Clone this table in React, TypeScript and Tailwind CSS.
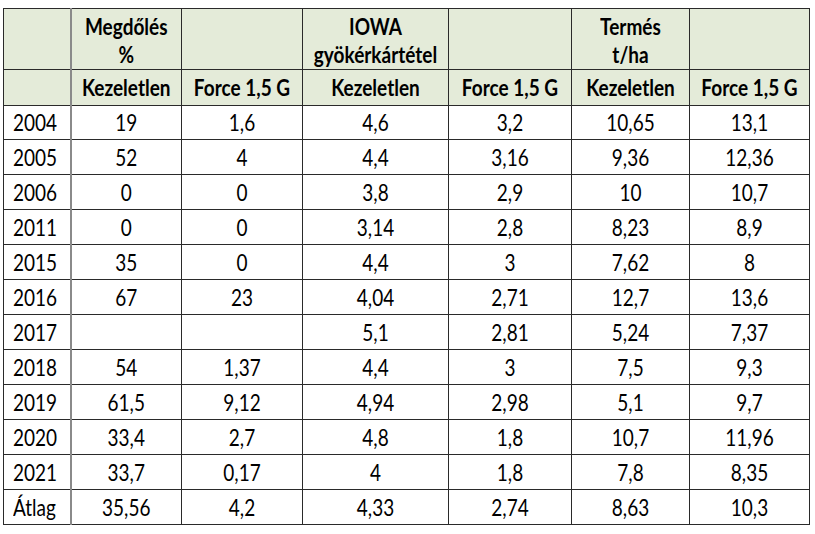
import React from "react";

const rows: string[][] = [
  ["2004", "19", "1,6", "4,6", "3,2", "10,65", "13,1"],
  ["2005", "52", "4", "4,4", "3,16", "9,36", "12,36"],
  ["2006", "0", "0", "3,8", "2,9", "10", "10,7"],
  ["2011", "0", "0", "3,14", "2,8", "8,23", "8,9"],
  ["2015", "35", "0", "4,4", "3", "7,62", "8"],
  ["2016", "67", "23", "4,04", "2,71", "12,7", "13,6"],
  ["2017", "", "", "5,1", "2,81", "5,24", "7,37"],
  ["2018", "54", "1,37", "4,4", "3", "7,5", "9,3"],
  ["2019", "61,5", "9,12", "4,94", "2,98", "5,1", "9,7"],
  ["2020", "33,4", "2,7", "4,8", "1,8", "10,7", "11,96"],
  ["2021", "33,7", "0,17", "4", "1,8", "7,8", "8,35"],
  ["Átlag", "35,56", "4,2", "4,33", "2,74", "8,63", "10,3"],
];

const widths = ["w-[67px]", "w-[111px]", "w-[121px]", "w-[146px]", "w-[123px]", "w-[118px]", "w-[120px]"];

function T({ children }: { children: React.ReactNode }) {
  return <span className="inline-block scale-y-[1.18]">{children}</span>;
}

export default function App() {
  const cellBase = "border border-[#2a2a2a] text-center p-0";
  const firstCol = "border-r-2 border-r-[#8a8a8a]";
  return (
    <div className="w-[815px] h-[534px] bg-white pt-[8px] pl-[3px]" style={{ fontFamily: "Lato, 'Open Sans', sans-serif" }}>
      <table className="border-collapse table-fixed w-[806px] text-[19px] text-black leading-none">
        <colgroup>
          {widths.map((w, i) => (
            <col key={i} className={w} />
          ))}
        </colgroup>
        <thead>
          <tr className="h-[61px] bg-[#e4ebd9] font-bold">
            <th className={`${cellBase} ${firstCol}`}></th>
            <th className={`${cellBase} align-bottom`}>
              <div className="leading-[28px]"><T>Megdőlés</T></div>
              <div className="leading-[28px]"><T>%</T></div>
            </th>
            <th className={cellBase}></th>
            <th className={`${cellBase} align-bottom`}>
              <div className="leading-[28px]"><T>IOWA</T></div>
              <div className="leading-[28px]"><T>gyökérkártétel</T></div>
            </th>
            <th className={cellBase}></th>
            <th className={`${cellBase} align-bottom`}>
              <div className="leading-[28px]"><T>Termés</T></div>
              <div className="leading-[28px]"><T>t/ha</T></div>
            </th>
            <th className={cellBase}></th>
          </tr>
          <tr className="h-[36px] bg-[#e4ebd9] font-bold">
            <th className={`${cellBase} ${firstCol}`}></th>
            <th className={cellBase}><T>Kezeletlen</T></th>
            <th className={cellBase}><T>Force 1,5 G</T></th>
            <th className={cellBase}><T>Kezeletlen</T></th>
            <th className={cellBase}><T>Force 1,5 G</T></th>
            <th className={cellBase}><T>Kezeletlen</T></th>
            <th className={cellBase}><T>Force 1,5 G</T></th>
          </tr>
        </thead>
        <tbody>
          {rows.map((r, ri) => (
            <tr key={ri} className={ri === 0 ? "h-[34px]" : "h-[35px]"}>
              {r.map((c, ci) => (
                <td
                  key={ci}
                  className={
                    ci === 0
                      ? `${cellBase} ${firstCol} text-left pl-[9px]`
                      : cellBase
                  }
                >
                  <T>{c}</T>
                </td>
              ))}
            </tr>
          ))}
        </tbody>
      </table>
    </div>
  );
}
